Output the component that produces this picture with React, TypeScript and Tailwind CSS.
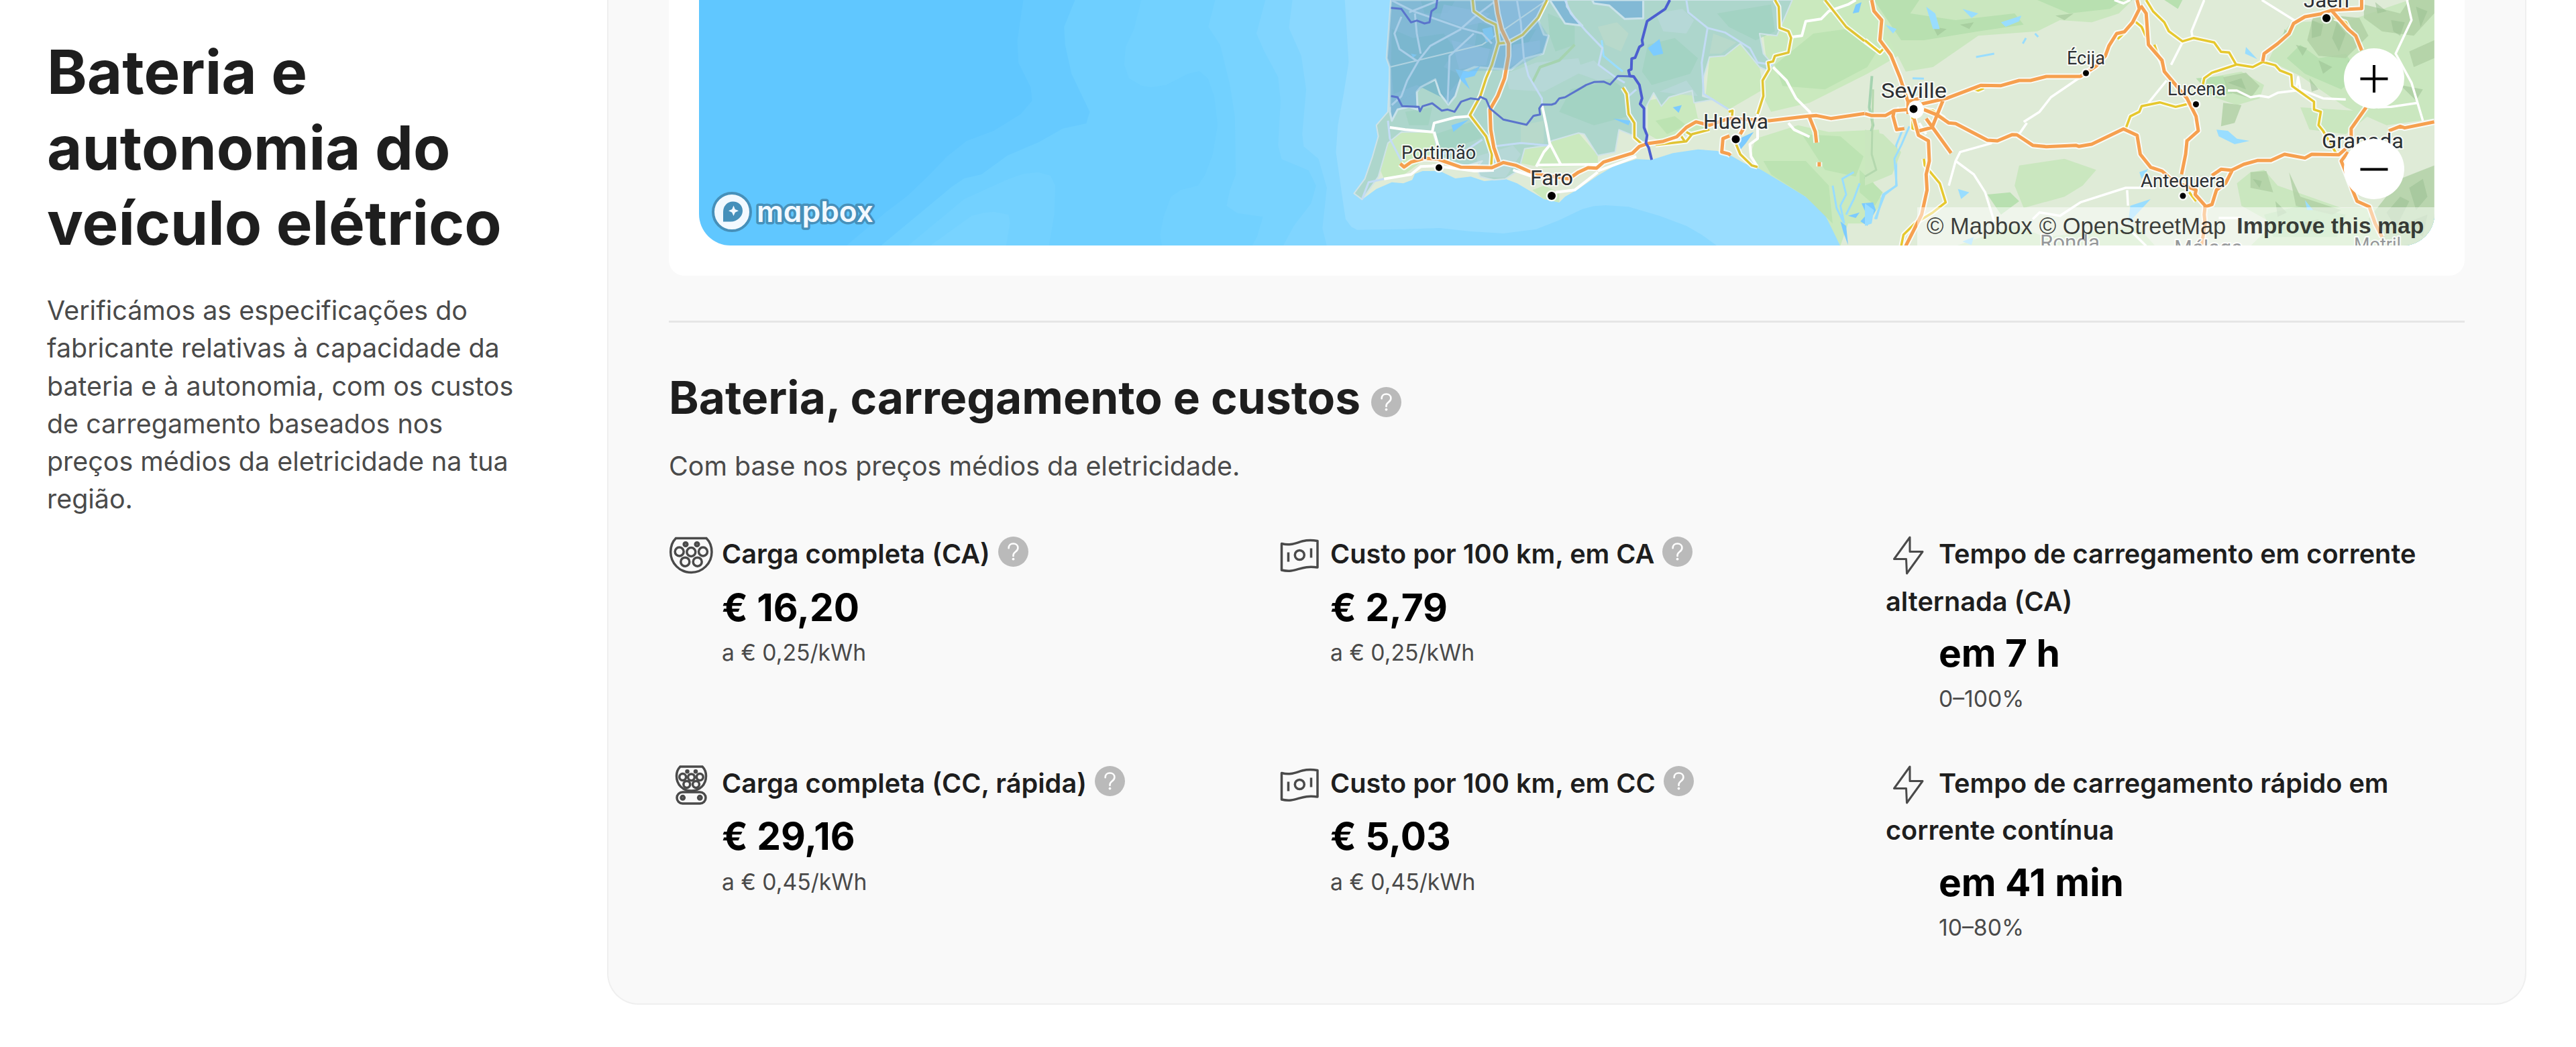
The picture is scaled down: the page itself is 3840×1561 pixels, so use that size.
import type { ReactNode } from 'react';

type Metric = {
  icon: ReactNode;
  label: string;
  value: string;
  note: string;
  help?: boolean;
};

/* ---------- Icons ---------- */

function HelpIcon({ className = '' }: { className?: string }) {
  return (
    <svg viewBox="0 0 45 45" className={`inline-block size-[45px] align-[-5px] ${className}`} aria-hidden="true">
      <circle cx="22.5" cy="22.5" r="22.5" fill="#bababa" />
      <path
        d="M15.6 17.2c0-4.2 3-6.7 6.9-6.7s6.9 2.5 6.9 6.2c0 3-1.7 4.5-3.7 6-2 1.5-3.2 2.7-3.2 5v1.2"
        fill="none"
        stroke="#fff"
        strokeWidth="2.6"
        strokeLinecap="round"
      />
      <circle cx="22.5" cy="33.6" r="1.9" fill="#fff" />
    </svg>
  );
}

const iconClass = 'inline-block w-[66px] h-[60px] mr-[13px] align-[-18px]';

function TypeTwoIcon() {
  return (
    <svg viewBox="0 0 66 60" className={iconClass} fill="none" stroke="#4a4a4a" strokeWidth="3.5" aria-hidden="true">
      <path d="M10.5 4.5h45.5c4.8 4.8 8 11.5 8 20.5 0 17-13.8 30.5-30.7 30.5S2.7 42 2.7 25c0-9 3-15.7 7.800-20.5Z" />
      <circle cx="25" cy="13.5" r="2.8" fill="#777" />
      <circle cx="42" cy="13.5" r="2.8" fill="#777" />
      <circle cx="15.7" cy="24.5" r="6.5" />
      <circle cx="33.3" cy="25" r="6.5" />
      <circle cx="51" cy="24.5" r="6.5" />
      <circle cx="24.3" cy="39.7" r="6.5" />
      <circle cx="42.7" cy="39.7" r="6.5" />
    </svg>
  );
}

function ComboIcon() {
  return (
    <svg viewBox="0 0 66 60" className={iconClass} fill="none" stroke="#4a4a4a" strokeWidth="3.5" aria-hidden="true">
      <path d="M17 3h33c4 4 5.5 8.5 5.5 14C55.5 30 46 39 33.5 39S11.5 30 11.5 17c0-5.5 1.5-10 5.5-14Z" />
      <circle cx="27.5" cy="10.3" r="2" fill="#4a4a4a" strokeWidth="2.5" />
      <circle cx="40" cy="10.3" r="2" fill="#4a4a4a" strokeWidth="2.5" />
      <circle cx="20.7" cy="18.5" r="4.9" />
      <circle cx="33.5" cy="18.8" r="4.9" />
      <circle cx="46.3" cy="18.5" r="4.9" />
      <circle cx="26.8" cy="29.5" r="4.9" />
      <circle cx="40.5" cy="29.5" r="4.9" />
      <rect x="12" y="41" width="43" height="17" rx="8.5" />
      <circle cx="20.7" cy="49.3" r="2.7" fill="#777" />
      <circle cx="46.3" cy="49.3" r="2.7" fill="#777" />
    </svg>
  );
}

function MoneyIcon() {
  return (
    <svg viewBox="0 0 66 60" className={iconClass} fill="none" stroke="#4a4a4a" strokeWidth="3.5" strokeLinejoin="round" aria-hidden="true">
      <path d="M6.5 12.5c22 5.5 27-9 53.500-4v39.5c-26.5-4-31 9-53.500 4Z" />
      <circle cx="33.3" cy="29.5" r="7" />
      <path d="M16.5 25.5v14M50.5 19.5v14" />
    </svg>
  );
}

function BoltIcon() {
  return (
    <svg viewBox="0 0 66 60" className={iconClass} fill="none" stroke="#4a4a4a" strokeWidth="3" strokeLinejoin="round" aria-hidden="true">
      <path d="M36 3 12.500 35.500h18L31.500 57 55 24.500H36Z" />
    </svg>
  );
}

const metrics: Metric[] = [
  { icon: <TypeTwoIcon />, label: 'Carga completa (CA)', value: '€ 16,20', note: 'a € 0,25/kWh', help: true },
  { icon: <MoneyIcon />, label: 'Custo por 100 km, em CA', value: '€ 2,79', note: 'a € 0,25/kWh', help: true },
  { icon: <BoltIcon />, label: 'Tempo de carregamento em corrente alternada (CA)', value: 'em 7 h', note: '0–100%' },
  { icon: <ComboIcon />, label: 'Carga completa (CC, rápida)', value: '€ 29,16', note: 'a € 0,45/kWh', help: true },
  { icon: <MoneyIcon />, label: 'Custo por 100 km, em CC', value: '€ 5,03', note: 'a € 0,45/kWh', help: true },
  { icon: <BoltIcon />, label: 'Tempo de carregamento rápido em corrente contínua', value: 'em 41 min', note: '10–80%' },
];

/* ---------- Map ---------- */

// Sea depth bands, deepest first
const seaBands = [
  { fill: '#66caff', d: 'M880 0L868 180 870 280 895 390 898 450 875 510 820 585 765 630 725 700 690 780 645 875 600 950 520 1100H3900V0Z' },
  { fill: '#6ecfff', d: 'M985 0L963 120 965 200 978 330 1015 500 1008 552 960 575 912 635 848 695 795 780 760 798 735 835 590 1100H3900V0Z' },
  { fill: '#73d1ff', d: 'M645 1100L760 890 850 800 880 778 910 770 935 785 945 830 943 960 932 1100Z' },
  { fill: '#78d3ff', d: 'M690 1100L775 965 800 952 820 947 850 960 853 1000 845 1100Z' },
  { fill: '#72d1ff', d: 'M1120 0L1105 130 1088 210 1085 290 1095 350 1120 383 1140 390 1170 380 1215 330 1238 318 1255 350 1268 430 1275 560 1265 690 1250 780 1235 830 1200 850 1180 880 1165 970 1158 1050 1162 1100H3900V0Z' },
  { fill: '#78d3ff', d: 'M1270 0L1256 120 1280 200 1300 380 1310 520 1312 780 1300 850 1293 920 1315 953 1367 970 1355 1060 1345 1100H3900V0Z' },
  { fill: '#80d5ff', d: 'M1372 0L1354 150 1370 230 1398 345 1403 450 1398 650 1405 712 1460 762 1475 830 1465 910 1430 1010 1408 1100H3900V0Z' },
  { fill: '#8ad8ff', d: 'M1427 0L1420 125 1445 250 1455 400 1447 600 1450 655 1480 710 1497 840 1488 1020 1497 1100H3900V0Z' },
];

const west = {
  shelf: 'M43 0L53 280 40 420 25 560 20 680 38 900 45 980 60 1015 75 1028 190 1025 290 1020 370 1035 455 1044 540 1025 600 985 660 935 690 922 720 918 780 925 860 965 930 1010 970 1050 1010 1100H1600V0Z',
  land: 'M163 0L158 120 152 260 160 300 160 430 155 500 125 560 130 610 115 700 95 800 67 865 88 892 125 845 165 815 195 820 218 805 225 778 245 765 290 765 330 798 370 790 405 810 460 800 490 820 530 860 560 890 600 905 615 880 650 845 700 785 740 745 800 712 840 715 895 685 960 668 1010 675 1045 695 1080 730 1120 755 1190 815 1240 880 1290 960 1315 1040 1330 1100H2900V0Z',
  green: [
    'M1205 0H1520L1560 240 1480 250 1400 330 1250 460 1150 500 1120 400 1140 300 1130 160 1165 160Z',
    'M830 450L945 410 960 530 1000 560 870 640 830 600Z',
    'M990 260L1070 195 1120 300 1130 400 1040 490 980 430Z',
    'M180 600L210 585 270 595 280 650 260 700 190 790 145 800 135 760 150 650Z',
    'M505 665L650 595 700 695 700 740 560 750 500 730Z',
    'M1110 620L1220 560 1300 590 1430 580 1440 690 1400 760 1440 900 1400 1000 1350 1000 1330 1100 1290 960 1240 880 1120 755 1095 700Z',
    'M560 890L530 850 560 830 600 860 600 905Z',
  ],
  greener: [
    'M1160 290L1260 150 1345 130 1425 230 1400 300 1290 400 1180 385Z',
    'M1400 0H1530L1568 100V230L1500 200 1440 80Z',
    'M1130 720L1240 720 1300 830 1310 1000 1240 880 1150 780Z',
    'M1230 600L1330 610 1390 700 1370 790 1290 760Z',
    'M1380 760L1440 860 1420 920 1380 860Z',
    'M850 540L900 520 930 560 880 600Z',
  ],
  // Driving range areas
  rangeFar: 'M568 0H1205L1180 100 1165 160 1120 150 1130 240 1155 290 1140 315 1120 300 1070 195 1030 250 990 255 975 345 972 430 1000 445 950 460 945 405 885 435 865 475 845 415 825 480 825 640 795 615 790 605 755 580 745 680 700 695 665 600 650 595 580 630 570 650 510 665 495 760 460 800 430 805 395 790 385 750 400 720 360 740 290 720 280 650 275 590 190 590 155 640 130 790 88 892 67 865 95 800 115 700 130 610 125 560 155 500 160 300 400 200Z',
  rangeNear: 'M163 0L158 120 152 260 160 300 160 500 165 540 180 490 210 478 232 490 230 410 240 390 278 355 290 420 312 468 330 430 350 320 380 300 475 312 510 262 558 240 565 200 572 160 560 155 545 90 568 0ZM575 0L615 105 660 115 640 80 620 30 618 0ZM685 0L690 15 730 25 770 85 818 82V0Z',
  rangeShade: [
    { fill: '#9dd0bd', d: 'M630 400L740 360 770 400 780 520 690 560 600 500ZM830 200L900 170 960 260 940 330 840 380 815 320ZM570 60L640 110 640 200 590 230 575 160ZM280 600L380 540 410 610 360 640 290 680ZM1010 60L1150 20 1160 140 1110 180 1040 120ZM200 500L270 480 260 560 210 560Z' },
    { fill: '#bcd9dd', d: 'M460 330L540 280 650 260 660 320 560 410 470 400ZM850 60L920 40 950 90 930 150 870 140ZM620 310L690 270 740 350 700 360ZM860 410L930 360 960 430 900 420ZM385 700L480 650 500 690 460 795 395 790Z' },
    { fill: '#c0dbc9', d: 'M700 120L750 100 780 150 760 230 720 200ZM1000 150L1060 190 1020 240 990 240ZM500 560L560 540 560 640 500 640Z' },
  ],
  nearShade: [
    { fill: '#74b5c9', d: 'M165 130L220 170 300 150 330 220 300 300 350 340 300 440 230 380 170 420 163 300ZM390 100L430 120 425 220 380 210ZM470 160L540 130 520 190 480 230ZM240 0H330L310 60 250 60Z' },
    { fill: '#90bde2', d: 'M300 20L420 60 400 100 350 120 290 80ZM430 0H560L540 90 500 150 470 180 450 100ZM320 180L420 220 410 290 340 310ZM480 200L550 180 550 230 470 300Z' },
  ],
  water: 'M400 130L425 120 430 170 410 190ZM330 310L365 320 395 295 380 340 355 350 368 400 345 360ZM830 215L860 175 870 240 845 250ZM895 480L918 470 910 505ZM740 530L785 540 780 560ZM320 560L365 535 325 590ZM1370 20L1385 10 1378 55 1362 60ZM1450 105L1475 125 1465 150ZM215 240L230 245 220 258ZM1055 630L1105 590 1085 640 1065 680ZM1385 910L1415 905 1422 940 1400 1010 1382 990 1398 960ZM1350 965L1380 950 1370 975ZM1330 990L1345 1010 1350 1096 1338 1040Z',
  rivers: 'M1365 770L1335 800 1345 870 1330 920 1340 1000M1310 830L1320 930 1340 1000M1380 820L1365 890 1345 960M1495 565L1475 650 1475 830 1445 870 1420 980M710 180L715 250 750 300 765 320',
  valleys: 'M640 200L600 270 550 300 530 370M1412 340L1405 480 1415 560 1400 640 1425 720 1395 800',
  paleRoads: 'M163 0L220 50 345 125 400 150 425 195M345 130L265 205 235 270 205 360 190 430 165 470M430 10L380 75 345 128M225 60L230 150 240 240M378 150L315 250 310 460M190 75L172 150 185 220 230 272M490 0L500 100 508 260M210 55L290 0M508 260L520 340 555 440 555 470M615 0L630 60 670 140 712 215 702 290 745 345 770 370M930 0L935 55 985 125 970 280 975 420 1040 490M985 125L1030 145 1095 215 1115 280 1155 290M88 890L105 815 145 800M155 540L160 620 190 720M780 430L800 400M430 655L500 640 570 650M400 625L360 670 290 690',
  whiteRoads: 'M1155 300L1190 360 1215 440 1250 500 1255 520M1370 0L1350 20 1300 50 1280 85 1240 95 1230 160 1205 165M555 470L565 550 575 640 605 740M145 800L215 780 240 745 300 740M270 740L380 765 430 762M480 760L530 790M540 745L560 680 575 650M540 738L700 735M700 770L640 850 590 860M160 570L200 580 270 590 275 550 330 525 370 520M275 590L285 650 285 720M1195 550L1210 580 1250 612M1115 510L1115 620 1095 645 1098 700 1115 747M800 700L700 765',
  yellowRoads: 'M375 0L378 50 410 90 435 110 442 190 425 290 410 350 395 430 368 515 410 610 425 690 423 745M568 0L545 80 505 155 468 190 440 195M765 392L775 420 780 510 795 550 795 615 815 645M1160 0L1170 30 1172 125 1195 140 1202 170 1195 235 1160 250 1155 275 1142 280 1145 310 1128 360 1130 430 1115 510M1290 0L1345 120 1390 180 1433 235 1440 220M850 648L930 632 945 600 990 580M915 605L925 630M930 590L945 605M1058 640L1070 690 1100 740 1115 747M1040 500L1050 495 1048 530',
  orangeRoads: 'M435 0L440 60 450 130 468 195 468 250 458 350 440 430 420 490 422 580 430 660 443 725M187 732L197 747 215 725 250 708 285 712 345 748 425 750 455 727 488 740 520 765 545 780 625 800 650 770 675 750 697 752 715 725 790 685 808 655 830 642 870 632 905 612 930 570 955 545 990 560 1040 530 1145 540 1245 520 1268 517 1305 530 1393 508M1250 525L1265 590 1268 638M1045 695L1040 688 1022 680 1025 620 1042 608M1275 725V745M1070 600L1080 570',
  borders: 'M163 35L190 40 215 100 230 92 250 105 263 100 268 50 280 35 283 0M163 430L180 435 192 475 235 478 238 498 245 475 270 462 295 495 310 490 328 500 345 455 370 440 390 445 395 433 410 445 420 485 455 535 515 558 533 518 550 512 548 485 555 467 580 468 590 462 600 440 615 435 650 400 670 380 690 367 715 365 732 378 752 340 792 342',
  country: 'M887 0L875 40 828 95 815 180 817 200 808 210 797 258 788 262 787 310 780 315 783 340 793 342 808 380 815 440 810 465 820 485 820 570 828 605 825 640 832 660 840 715',
};

const east = {
  green: [
    'M0 0H590L560 60 500 100 430 90 380 140 250 160 150 300 90 320 60 200Z',
    'M940 100L1070 90 1200 0H1255V530L1150 560 1060 480 960 340 890 270 910 180Z',
    'M340 740L440 710 510 760 480 830 440 880 350 930 330 830Z',
    'M850 770L880 760 910 830 980 880 1050 930H1255V1100H850L900 1000 830 920 820 820Z',
    'M0 580L40 600 80 680 60 780 0 830Z',
    'M200 1100L330 1010 400 1060 600 1010 640 1100Z',
    'M750 350L830 320 880 380 870 440 820 470 750 420Z',
    'M960 480L1120 500 1060 600 980 580Z',
  ],
  greener: [
    'M20 0H120L100 60 200 90 330 60 350 110 250 140 130 180 80 180Z',
    'M380 0H570L540 40 450 60Z',
    'M960 200L1000 260 1060 240 1090 330 1050 400 970 330 930 260Z',
    'M880 960L960 920 1060 960 1040 1060 900 1060Z',
    'M730 350L790 340 810 420 760 420Z',
    'M270 870L320 860 340 900 300 960Z',
    'M660 0L700 0 690 40Z',
  ],
  dark: [
    'M990 60L1090 80 1110 160 1060 260 1000 250 975 180Z',
    'M1100 20L1180 60 1200 0H1255V60L1210 160 1140 140 1100 80Z',
    'M790 345L840 325 870 385 850 440 800 410Z',
    'M790 460L830 470 815 550 785 565Z',
    'M850 770L885 765 900 860 850 840Z',
    'M1110 980L1180 800 1255 740V1100H1150Z',
    'M935 770L960 880 1050 940 1030 960 950 920Z',
    'M1200 230L1255 180V260L1210 300Z',
  ],
  // Relief on the sierras
  relief: [
    'M985 90L1010 110 1005 160 985 170ZM1040 100L1060 150 1045 230 1030 170ZM950 200L975 215 965 250ZM1000 270L1030 300 1010 330ZM1065 270L1085 310 1070 360ZM980 350L1000 400 985 410ZM1125 10L1150 50 1130 60ZM1160 90L1190 100 1180 160 1165 140ZM1215 30L1240 50 1225 120ZM1180 380L1230 400 1215 450ZM925 130L940 160 920 190Z',
    'M1150 950L1180 880 1200 900 1170 1020ZM1200 840L1230 800 1240 880 1215 940ZM1190 1000L1240 960 1230 1060ZM960 1000L1000 980 990 1040ZM855 800L875 810 870 840ZM905 900L930 950 910 970ZM800 370L830 350 840 400ZM210 110L240 100 230 130ZM420 70L460 60 440 90ZM150 120L180 130 160 160Z',
  ],
  water: 'M135 30L155 60 165 130 150 130ZM215 40L250 60 235 80ZM300 100L345 70 340 95 310 120ZM45 110L70 130 62 150ZM840 210L865 265 838 240ZM775 580L800 585 820 620 848 630 815 645 780 610ZM205 845L230 860 212 890ZM585 920L630 890 605 945 580 1000ZM970 895L988 940 975 940ZM0 910L20 940 15 1000 0 1010ZM605 770L625 755 610 800ZM215 1080L240 1060 235 1096Z',
  rivers: 'M98 565L80 650 65 710 70 830 40 870 25 980M105 350L130 352M355 170L348 195M375 150L382 165M245 255L285 240',
  valleys: 'M0 790L25 760 15 690 18 400',
  whiteRoads: 'M475 345L410 435 385 500 350 545M357 550L340 600M280 640L210 680 200 720 185 830M200 720L240 780 265 860 285 990M748 0L720 140 722 165M700 190L675 290M665 360L625 460M875 0L950 95M800 405L820 405 850 435 870 428 890 435 910 415 950 405 955 345 960 400 1010 440 1060 445M1195 0L1205 90 1170 240 1205 370 1230 540M1130 480L1160 478 1220 460M640 840H575L475 905 430 965 385 950 370 980M578 850L580 920M590 1040L620 1100M780 975H830M550 0L570 15 585 0M60 515L75 480M120 550L135 600',
  yellowRoads: 'M0 180L33 235 40 220M620 0L635 50 660 100 670 140 700 185 725 170 770 190 785 232 803 235 818 288 855 300 877 277 905 292 915 315 940 335 942 385 990 455 990 490 1005 500 1000 560 1010 585 1040 690M818 290L765 325 748 350 745 380M575 575L585 520 605 500 610 475 650 458 685 478 712 465M595 95L610 120 620 165M638 200L645 240 660 310M105 520L105 575 120 585M130 710L132 740 165 820 178 905 150 950 110 1000 85 1050 80 1100M130 490L150 495 175 530M235 395L250 405 262 395M575 140L557 175M730 540L735 590M1035 80L1060 100 1070 140M715 860L730 900M708 620V650',
  orangeRoads: 'M15 0L20 50 37 90 33 180 57 245 77 345 95 455 95 510M125 465L180 440 255 382 300 383 340 360 365 360 400 342 475 342 510 295 530 250 538 205 555 150 572 142 590 100 605 40 600 0M608 25L620 60 625 200 655 270 660 320 710 440 730 520 735 585 710 630 707 690 698 780M0 508L15 517 45 517 65 495 95 490M130 490L160 515 185 550 200 553 270 627 292 630 325 602 335 603 370 650 400 656 465 650 472 655 500 645 570 577 600 605 607 690 630 748 655 765 680 810 730 850 728 870 750 920 748 960 750 1000 742 1100M750 925L765 915 775 850 795 820 810 760 835 735 865 718 895 718 925 690 970 707 985 690 1045 692 1060 665M765 785L785 757 810 762M1065 680L1050 720 1058 760 1075 850 1085 900 1112 925 1125 1000 1140 1060M1072 620V575L1105 480M1155 585L1180 565 1190 572 1255 545M1095 0V38L1030 45 1005 62 970 75 945 105 935 150 910 195 880 240 877 275M1030 50L1065 130 1082 160 1095 225M135 530L190 685M172 450L148 570 120 585M65 490L62 520 70 580 87 575M108 530L118 605 140 630 142 720 135 780 137 850 125 960 90 1100M120 440L95 455',
};

const cities = [
  { name: 'Portimão', x: 2089, y: 236.5, w: 111, size: 27, dot: [2145, 250, 5] },
  { name: 'Faro', x: 2281, y: 276, w: 64, size: 32, dot: [2313, 292, 6] },
  { name: 'Huelva', x: 2539, y: 191.5, w: 97, size: 32, dot: [2587.5, 207.5, 6] },
  { name: 'Seville', x: 2804, y: 145.5, w: 98, size: 32, dot: [2852.5, 162.5, 6] },
  { name: 'Écija', x: 3081, y: 95.5, w: 57, size: 27, dot: [3109.5, 109, 4.5] },
  { name: 'Lucena', x: 3231, y: 141.5, w: 87, size: 27, dot: [3273.5, 155.5, 4.5] },
  { name: 'Antequera', x: 3191, y: 278.5, w: 126, size: 27, dot: [3254, 292, 4.5] },
  { name: 'Jaén', x: 3434, y: 10.5, w: 68, size: 31, dot: [3468, 27, 6] },
  { name: 'Granada', x: 3461, y: 221, w: 122, size: 32 },
  { name: 'Ronda', x: 3041, y: 372, w: 89, size: 31 },
  { name: 'Málaga', x: 3241, y: 380, w: 102, size: 32 },
  { name: 'Motril', x: 3509, y: 374, w: 70, size: 28 },
];

function Road({ d, color, width }: { d: string; color: string; width: number }) {
  return (
    <g fill="none" strokeLinejoin="round">
      <path d={d} stroke="#fff" strokeOpacity="0.8" strokeWidth={width + 4} vectorEffect="non-scaling-stroke" />
      <path d={d} stroke={color} strokeWidth={width} vectorEffect="non-scaling-stroke" />
    </g>
  );
}

function Line({ d, color, width }: { d: string; color: string; width: number }) {
  return <path d={d} fill="none" stroke={color} strokeWidth={width} strokeLinejoin="round" vectorEffect="non-scaling-stroke" />;
}

function MapCanvas() {
  return (
    <svg viewBox="1042 0 2587 366" preserveAspectRatio="none" className="block w-full h-full" aria-hidden="true">
      <rect x="1042" width="2587" height="366" fill="#60c7ff" />
      <g transform="translate(880 0) scale(0.7334 0.33333)">
        {seaBands.map((b) => (
          <path key={b.d} d={b.d} fill={b.fill} />
        ))}
      </g>

      {/* Algarve and Huelva */}
      <g transform="translate(1980 0) scale(0.574 0.33333)">
        <path d={west.shelf} fill="#99ddff" />
        <path d={west.land} fill="#dfebd7" />
        {west.green.map((d) => <path key={d} d={d} fill="#cae9be" />)}
        {west.greener.map((d) => <path key={d} d={d} fill="#bce3b2" />)}
        <path d={west.rangeFar} fill="#add6cc" />
        {west.rangeShade.map((s) => <path key={s.d} d={s.d} fill={s.fill} fillOpacity="0.6" />)}
        <path d={west.rangeNear} fill="#82b9d5" />
        {west.nearShade.map((s) => <path key={s.d} d={s.d} fill={s.fill} fillOpacity="0.8" />)}
        <Line d={west.rangeFar} color="#cfe3e8" width={2} />
        <Line d={west.rangeNear} color="#c9e2ea" width={3} />
        <path d={west.water} fill="#7ccbff" />
        <Line d={west.rivers} color="#99ddff" width={3} />
        <Line d={west.valleys} color="#a5d3b0" width={4} />
        <Line d={west.paleRoads} color="#c3dcf5" width={3} />
        <Line d={west.whiteRoads} color="#ffffff" width={4} />
        <Road d={west.yellowRoads} color="#e0c433" width={3.5} />
        <Road d={west.orangeRoads} color="#f6a04f" width={5} />
        <path d="M163 0L152 260 160 300 160 480 230 410 278 355 312 468 350 320 475 312 558 240 572 160 545 90 568 0Z" fill="#82b9d5" fillOpacity="0.4" />
        <Line d={west.borders} color="#5a74cc" width={3} />
        <Line d={west.country} color="#4c5fd0" width={4} />
      </g>

      {/* Andalusia */}
      <g transform="translate(2780 0) scale(0.6762 0.33333)">
        {east.green.map((d) => <path key={d} d={d} fill="#cae7bf" />)}
        {east.greener.map((d) => <path key={d} d={d} fill="#b8e0b0" />)}
        {east.dark.map((d) => <path key={d} d={d} fill="#afcfa4" fillOpacity="0.8" />)}
        {east.relief.map((d) => <path key={d} d={d} fill="#98bd8f" fillOpacity="0.5" />)}
        <path d={east.water} fill="#99ddff" />
        <Line d={east.rivers} color="#99ddff" width={3} />
        <Line d={east.valleys} color="#b4d8ae" width={3} />
        <Line d={east.whiteRoads} color="#ffffff" width={3.5} />
        <Road d={east.yellowRoads} color="#e6c82e" width={3.5} />
        <Road d={east.orangeRoads} color="#f6a04f" width={5} />
        <ellipse cx="112" cy="490" rx="18" ry="40" fill="#fff" />
      </g>

      <g fontFamily="Roboto, 'Noto Sans', sans-serif" fill="#2b2f33">
        {cities.map((c) => (
          <g key={c.name}>
            {c.dot && <circle cx={c.dot[0]} cy={c.dot[1]} r={c.dot[2]} fill="#000" stroke="#fff" strokeOpacity="0.8" strokeWidth="5" paintOrder="stroke" />}
            <text
              x={c.x}
              y={c.y}
              fontSize={c.size}
              textLength={c.w}
              lengthAdjust="spacingAndGlyphs"
              stroke="#fff"
              strokeOpacity="0.8"
              strokeWidth="4"
              strokeLinejoin="round"
              paintOrder="stroke"
            >
              {c.name}
            </text>
          </g>
        ))}
      </g>
    </svg>
  );
}

function MapboxLogo() {
  return (
    <svg viewBox="0 0 246 64" className="block w-[246px] h-[64px]" aria-label="Mapbox">
      <circle cx="31" cy="32" r="28" fill="#f2f9ff" stroke="#4690ba" strokeWidth="4" />
      <path d="M18 46.5V32c0-9 6-15.5 14.500-15.500S47 22.500 47 30.500 39 46.500 29 46.500Z" fill="#4690ba" />
      <path d="M33.500 22.500l2.300 5.400 5.200 2.400-5.200 2.400-2.300 5.400-2.300-5.400-5.200-2.400 5.200-2.400Z" fill="#f2f9ff" />
      <text
        x="68"
        y="46.5"
        fontSize="43"
        textLength="174"
        lengthAdjust="spacingAndGlyphs"
        fill="#f2f9ff"
        stroke="#4690ba"
        strokeWidth="7"
        strokeLinejoin="round"
        paintOrder="stroke"
        className="font-['Inter'] font-semibold [font-feature-settings:'cv11']"
      >
        mapbox
      </text>
    </svg>
  );
}

function RangeMap() {
  return (
    <div className="relative h-[366px] rounded-b-[47px] overflow-hidden">
      <MapCanvas />

      <div className="absolute left-[18px] bottom-[18px]">
        <MapboxLogo />
      </div>

      <div className="absolute right-0 bottom-0 w-[771px] h-[57px] bg-white/50 pl-[14px] pb-[1px] flex items-center whitespace-nowrap font-['Liberation_Sans',sans-serif] text-[34.5px] leading-none text-black/75">
        <span>© Mapbox</span>
        <span className="ml-[10px]">© OpenStreetMap</span>
        <span className="ml-[16px] font-bold text-[33.7px]">Improve this map</span>
      </div>

      {/* Zoom controls */}
      <div className="absolute top-[72px] right-[45px] flex flex-col gap-[45px]">
        {['M24.5 45.5h41M45 25v41', 'M24.5 45.5h41'].map((d) => (
          <button key={d} className="size-[90px] rounded-full bg-white">
            <svg viewBox="0 0 90 90" className="block size-full" fill="none" stroke="#000" strokeWidth="4">
              <path d={d} />
            </svg>
          </button>
        ))}
      </div>
    </div>
  );
}

/* ---------- Page ---------- */

function MetricItem({ icon, label, value, note, help }: Metric) {
  return (
    <div>
      <h3 className={`font-semibold text-[39.7px] leading-[70.4px] text-[#1e1e1e] ${help ? 'mb-[11px]' : 'mb-[9px]'}`}>
        {icon}
        {label}
        {help && <HelpIcon className="ml-[12px]" />}
      </h3>
      <div className="pl-[79px]">
        <p className="font-bold text-[56.8px] leading-[65.7px] text-black">{value}</p>
        <p className="mt-[11px] text-[33.7px] leading-[47px] text-[#4a4a4a]">{note}</p>
      </div>
    </div>
  );
}

export default function App() {
  return (
    <main className="flex w-[3840px] h-[1561px] overflow-hidden bg-white font-['Inter',sans-serif]">

      {/* Intro */}
      <aside className="w-[905px] shrink-0 pl-[70px] pt-[51px]">
        <h1 className="w-[760px] font-bold text-[90.4px] leading-[112.65px] text-[#1e1e1e]">
          Bateria e<br />autonomia do<br />veículo elétrico
        </h1>
        <p className="mt-[46px] text-[39.4px] leading-[56.3px] text-[#4a4a4a] whitespace-nowrap">
          Verificámos as especificações do<br />
          fabricante relativas à capacidade da<br />
          bateria e à autonomia, com os custos<br />
          de carregamento baseados nos<br />
          preços médios da eletricidade na tua<br />
          região.
        </p>
      </aside>

      {/* Report panel */}
      <section className="w-[2861px] h-[1498px] shrink-0 px-[90px] bg-[#f9f9f9] border-2 border-t-0 border-[#efefef] rounded-b-[47px]">
        <div className="h-[411px] px-[45px] bg-white rounded-b-[23px]">
          <RangeMap />
        </div>

        <hr className="mt-[67px] border-t-3 border-[#e6e6e6]" />

        <h2 className="mt-[70px] font-bold text-[67.6px] leading-[84px] text-[#1e1e1e]">
          Bateria, carregamento e custos
          <HelpIcon className="ml-[16px]" />
        </h2>
        <p className="mt-[32px] text-[39.4px] leading-[56.3px] text-[#4a4a4a]">
          Com base nos preços médios da eletricidade.
        </p>

        <div className="mt-[68px] grid grid-cols-[907px_907px_861px] gap-y-[68px]">
          {metrics.map((m) => (
            <MetricItem key={m.label} {...m} />
          ))}
        </div>
      </section>

    </main>
  );
}
